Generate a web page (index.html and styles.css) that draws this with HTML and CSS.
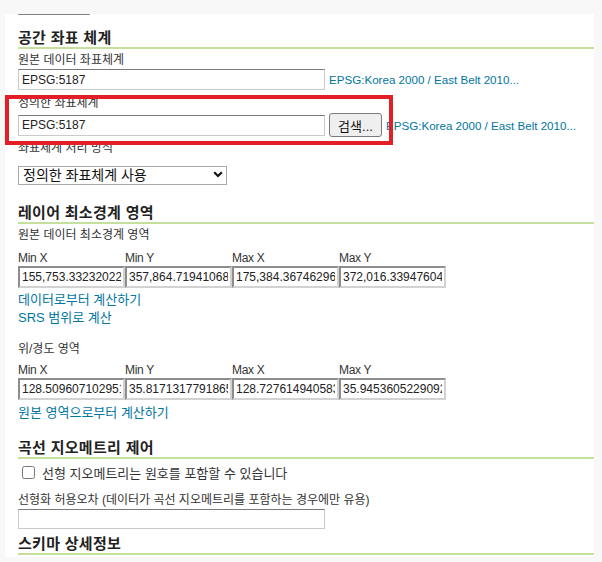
FILE: index.html
```html
<!DOCTYPE html>
<html lang="ko">
<head>
<meta charset="utf-8">
<title>레이어 편집</title>
<link rel="stylesheet" href="styles.css">
</head>
<body>
<div class="page">
  <div class="top-btn"></div>

  <h3 class="section s1">공간 좌표 체계</h3>
  <label class="lbl l-native">원본 데이터 좌표체계</label>
  <div class="row r1">
    <input class="txt" type="text" value="EPSG:5187">
    <a class="link" href="#">EPSG:Korea 2000 / East Belt 2010...</a>
  </div>

  <label class="lbl l-declared">정의한 좌표체계</label>
  <div class="row r2">
    <input class="txt" type="text" value="EPSG:5187">
    <button class="btn" type="button">검색...</button>
    <a class="link" href="#">EPSG:Korea 2000 / East Belt 2010...</a>
  </div>

  <label class="lbl l-policy">좌표체계 처리 방식</label>
  <div class="select-wrap">
    <select class="sel"><option>정의한 좌표체계 사용</option></select>
    <svg class="chev" width="10" height="7" viewBox="0 0 10 7"><path d="M1.2 1.3 L5 5 L8.8 1.3" fill="none" stroke="#111" stroke-width="2.2"/></svg>
  </div>

  <h3 class="section s2">레이어 최소경계 영역</h3>
  <label class="lbl l-bbox">원본 데이터 최소경계 영역</label>
  <div class="bbox b1">
    <span class="colhead">Min X</span><span class="colhead">Min Y</span><span class="colhead">Max X</span><span class="colhead">Max Y</span>
    <input class="num" type="text" value="155,753.33232022">
    <input class="num" type="text" value="357,864.71941068">
    <input class="num" type="text" value="175,384.36746296">
    <input class="num" type="text" value="372,016.33947604">
  </div>
  <a class="link blk bl1" href="#">데이터로부터 계산하기</a>
  <a class="link blk" href="#">SRS 범위로 계산</a>

  <label class="lbl l-ll">위/경도 영역</label>
  <div class="bbox b2">
    <span class="colhead">Min X</span><span class="colhead">Min Y</span><span class="colhead">Max X</span><span class="colhead">Max Y</span>
    <input class="num" type="text" value="128.50960710295124">
    <input class="num" type="text" value="35.817131779186545">
    <input class="num" type="text" value="128.72761494058316">
    <input class="num" type="text" value="35.945360522909246">
  </div>
  <a class="link blk bl2" href="#">원본 영역으로부터 계산하기</a>

  <h3 class="section s3">곡선 지오메트리 제어</h3>
  <label class="cb-row">
    <input class="cb" type="checkbox">
    <span>선형 지오메트리는 원호를 포함할 수 있습니다</span>
  </label>
  <label class="lbl l-tol">선형화 허용오차 (데이터가 곡선 지오메트리를 포함하는 경우에만 유용)</label>
  <input class="txt t-tol" type="text" value="">

  <h3 class="section s4">스키마 상세정보</h3>

  <div class="highlight"></div>
</div>
</body>
</html>
```

FILE: styles.css
```css
html, body {
  margin: 0;
  padding: 0;
}
body {
  background: #f8f8f8;
  font-family: "Liberation Sans", "Noto Sans CJK KR", sans-serif;
  color: #333;
}
.page {
  position: relative;
  margin: 14px 8px 0 5px;
  padding: 0 0 2px 13px;
  background: #fff;
}
.top-btn {
  width: 72px;
  height: 0;
  border-bottom: 1px solid #808080;
  border-radius: 0 0 2px 2px;
}
.section {
  margin: 0;
  font-size: 15px;
  font-weight: bold;
  line-height: 19px;
  letter-spacing: 0.3px;
  color: #222;
  border-bottom: 2px solid #c5df9d;
}
.s1 { margin-top: 13px; }
.s2 { margin-top: 18px; }
.s3 { margin-top: 16px; }
.s4 { margin-top: 5px; }

.lbl {
  display: block;
  font-size: 12px;
  line-height: 16px;
  color: #333;
}
.l-native { margin-top: 3px; }
.l-declared { margin-top: 5px; }
.l-policy { margin-top: 3px; }
.l-bbox { margin-top: 3px; }
.l-ll { margin-top: 14px; }
.l-tol { margin-top: 9px; }

.row {
  display: flex;
  align-items: center;
  gap: 4px;
}
.r1 { margin-top: 1px; }
.r2 { margin-top: 2px; }

.txt {
  box-sizing: border-box;
  width: 307px;
  height: 21px;
  margin: 0;
  padding: 0 3px;
  border: 1px solid #cacaca;
  border-top-color: #7a7a7a;
  font: 12px "Liberation Sans", sans-serif;
  color: #222;
  background: #fff;
}
.t-tol {
  display: block;
  margin-top: 1px;
  height: 20px;
}
.link {
  font-size: 11.6px;
  line-height: 17px;
  color: #0076a1;
  text-decoration: none;
}
.link.blk {
  display: block;
  width: max-content;
  font-size: 13px;
  line-height: 18px;
}
.bl1 { margin-top: 3px; }
.bl2 { margin-top: 4px; }

.btn {
  box-sizing: border-box;
  width: 53px;
  height: 24px;
  margin: 0;
  padding: 0;
  border: 1px solid #7a7a7a;
  border-radius: 3px;
  background: #efefef;
  font: 13px "Liberation Sans", "Noto Sans CJK KR", sans-serif;
  color: #111;
}

.select-wrap {
  position: relative;
  width: 209px;
  margin-top: 10px;
}
.sel {
  appearance: none;
  -webkit-appearance: none;
  display: block;
  box-sizing: border-box;
  width: 209px;
  height: 19px;
  margin: 0;
  padding: 0 0 0 4px;
  border: 1px solid #a9a9a9;
  border-radius: 0;
  background: #fff;
  font: 14px "Liberation Sans", "Noto Sans CJK KR", sans-serif;
  line-height: 17px;
  color: #111;
}
.chev {
  position: absolute;
  left: 195px;
  top: 5px;
  pointer-events: none;
}

.bbox {
  display: grid;
  grid-template-columns: repeat(4, 107px);
}
.b1 { margin-top: 7px; }
.b2 { margin-top: 5px; }
.colhead {
  font-size: 12px;
  line-height: 16px;
  letter-spacing: -0.3px;
  color: #333;
}
.num {
  box-sizing: border-box;
  width: 107px;
  height: 22px;
  margin: 0;
  padding: 0 2px;
  border: 2px solid;
  border-color: #8d8d8d #d2d2d2 #d2d2d2 #8d8d8d;
  font: 12px "Liberation Sans", sans-serif;
  color: #222;
  background: #fff;
}

.cb-row {
  display: flex;
  align-items: center;
  height: 22px;
  margin-top: 2px;
  font-size: 13px;
  color: #333;
}
.cb {
  width: 13px;
  height: 13px;
  margin: 0 7px 0 4px;
}

.highlight {
  position: absolute;
  left: 0;
  top: 81px;
  width: 388px;
  height: 50px;
  box-sizing: border-box;
  border: 4px solid #e21f26;
}
```
